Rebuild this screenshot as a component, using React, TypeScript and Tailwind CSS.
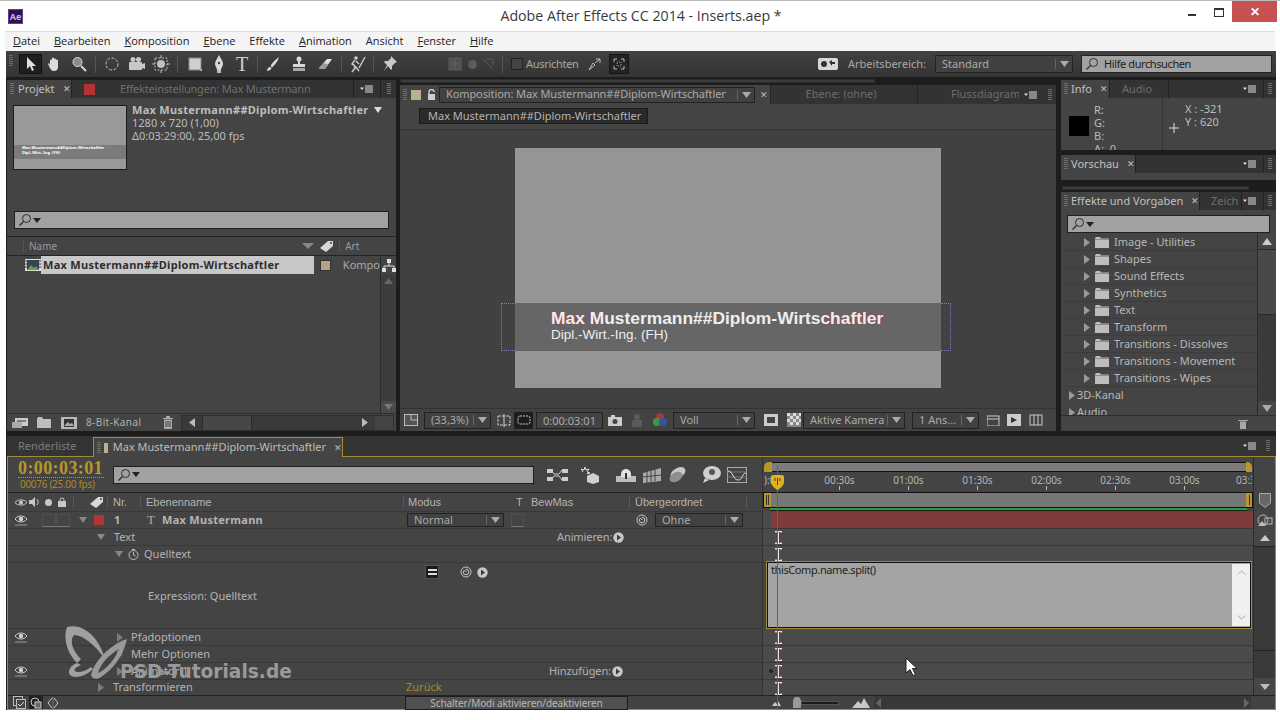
import React from "react";

type P = { className?: string };

const Ic = ({ s = 16, h, children, className = "" }: { s?: number; h?: number; children: React.ReactNode; className?: string }) => (
  <svg width={s} height={h ?? s} viewBox={`0 0 ${s} ${h ?? s}`} className={`shrink-0 ${className}`}>{children}</svg>
);
const Grip = ({ className = "" }: P) => (
  <div className={`w-[4px] h-[12px] shrink-0 flex flex-col gap-[1px] ${className}`}>
    {[0, 1, 2, 3, 4, 5].map((i) => <div key={i} className="h-[1px] bg-[#6c6c6c]" />)}
  </div>
);
const Menu = ({ className = "" }: P) => (
  <Ic s={14} h={8} className={className}>
    <path d="M0 2.5h4L2 5z" fill="#ddd" />
    <path d="M5 1h8M5 3h8M5 5h8M5 7h8" stroke="#ddd" strokeWidth="1" />
  </Ic>
);
const Right = ({ c = "#9a9a9a", s = 8 }: { c?: string; s?: number }) => (
  <Ic s={s} h={9}><path d={`M1 0L${s - 1} 4.5L1 9z`} fill={c} /></Ic>
);
const Lens = ({ c = "#2c2c2c" }: { c?: string }) => (
  <Ic s={14} h={14}>
    <circle cx="8.5" cy="5.5" r="4" fill="none" stroke={c} strokeWidth="1" />
    <path d="M5.5 8.5L1.5 12.5" stroke={c} strokeWidth="1.3" />
  </Ic>
);
const Eye = () => (
  <Ic s={14} h={12}>
    <path d="M1 5C4 1 10 1 13 5C10 9 4 9 1 5z" fill="none" stroke="#d0d0d0" />
    <circle cx="7" cy="5" r="2.2" fill="#d0d0d0" />
    <path d="M1 11h12" stroke="#9c9c9c" />
  </Ic>
);
const Spiral = () => (
  <Ic s={12} h={12}>
    <circle cx="6" cy="6" r="5" fill="none" stroke="#c4c4c4" />
    <path d="M6 3.2a2.8 2.8 0 1 1-2.8 2.8a1.5 1.5 0 0 1 3 0" fill="none" stroke="#c4c4c4" />
  </Ic>
);
const RoundArrow = () => (
  <Ic s={11} h={11}>
    <circle cx="5.5" cy="5.5" r="5.2" fill="#c8c8c8" />
    <path d="M4 2.6L8 5.5L4 8.4z" fill="#3a3a3a" />
  </Ic>
);
const Folder = () => (
  <Ic s={14} h={12}>
    <path d="M0 2.5l1-1.5h4l1 1.5h8v9.5H0z" fill="#bdbdbd" />
    <path d="M0 3.5h14" stroke="#8d8d8d" />
  </Ic>
);
const Beam = () => (
  <Ic s={7} h={13} className="ml-[12px]">
    <path d="M0 0.5h7M0 12.5h7M3.5 0v13" stroke="#f0e4e4" fill="none" />
    <path d="M0 1.5h2M5 1.5h2M0 11.5h2M5 11.5h2" stroke="#b08080" fill="none" />
  </Ic>
);
const Slot = ({ className = "", children }: { className?: string; children: React.ReactNode }) => (
  <div className={`shrink-0 flex items-center justify-center ${className}`}>{children}</div>
);
const Tag = () => (
  <Ic s={16} h={14}>
    <path d="M1 9L9 2h5v5l-7 6z" fill="#d8d8d8" />
    <circle cx="12" cy="4" r="1" fill="#444" />
  </Ic>
);
const Sep = ({ className = "" }: P) => <div className={`w-[1px] h-[18px] bg-[#555] shrink-0 ${className}`} />;
const Dropdown = ({ label, className, text = "text-[#a9a9a9]" }: { label: string; className: string; text?: string }) => (
  <div className={`flex items-center border border-[#222] bg-[#414141] shrink-0 ${className}`}>
    <span className={`flex-1 pl-[6px] whitespace-nowrap overflow-hidden ${text}`}>{label}</span>
    <div className="w-[1px] h-[10px] bg-[#666]" />
    <Slot className="w-[16px]"><Ic s={9} h={6}><path d="M0 0h9L4.5 6z" fill="#aaa" /></Ic></Slot>
  </div>
);

function TitleBar() {
  return (
    <div className="h-[31px] shrink-0 flex items-center relative border-t border-[#bdbdbd] bg-white">
      <div className="ml-[8px] w-[15px] h-[15px] bg-[#2a1450] border border-[#5a4090] text-[9px] leading-[13px] text-center text-[#c8b4f0] font-bold">Ae</div>
      <div className="absolute left-0 right-0 text-center text-[14.2px] text-[#3a3a3a] font-['Open_Sans',sans-serif] pl-[2px]">Adobe After Effects CC 2014 - Inserts.aep *</div>
      <div className="ml-auto flex items-start self-start mr-[3px]">
        <div className="w-[8px] h-[2px] bg-[#333] mt-[13px] mr-[18px]" />
        <div className="w-[10px] h-[9px] border border-[#333] border-t-2 mt-[7px] mr-[8px]" />
        <div className="w-[45px] h-[21px] bg-[#c75050] flex items-center justify-center text-white text-[12px] font-bold">✕</div>
      </div>
    </div>
  );
}

function MenuBar() {
  const items = [["D", "atei"], ["B", "earbeiten"], ["K", "omposition"], ["E", "bene"], ["", "Effekte"], ["A", "nimation"], ["", "Ansicht"], ["F", "enster"], ["H", "ilfe"]];
  return (
    <div className="h-[20px] shrink-0 mx-[5px] bg-[#f4f4f4] border-t border-[#dcdcdc] flex items-center gap-[14px] pl-[8px] text-[11px] text-[#222] font-['Open_Sans',sans-serif]">
      {items.map(([u, r], i) => (
        <span key={i}><span className="underline">{u}</span>{r}</span>
      ))}
    </div>
  );
}

function Toolbar() {
  return (
    <div className="h-[26px] shrink-0 bg-linear-to-b from-[#414141] to-[#343434] flex items-center text-[11px] text-[#a8a8a8]">
      <Grip className="ml-[3px] mr-[6px] h-[18px]" />
      <Slot className="w-[23px] h-[20px] bg-[#1f1f1f] border border-[#111]"><Ic s={12} h={16}><path d="M2 1v12l3-3 2 5 2-1-2-4h4z" fill="#e0e0e0" /></Ic></Slot>
      <Slot className="w-[23px]"><Ic s={16}><path d="M4 9V4.5a1 1 0 0 1 2 0V2.5a1 1 0 0 1 2 0v1a1 1 0 0 1 2 0v1a1 1 0 0 1 2 0V11c0 2.5-1.5 4-4 4s-3.5-1.5-5-5l-1-2c0-1 1.5-1 2 1z" fill="#dcdcdc" /></Ic></Slot>
      <Slot className="w-[27px]"><Ic s={16}><circle cx="6.5" cy="6" r="4.5" fill="#8b8b8b" stroke="#d8d8d8" /><path d="M10 10l5 5" stroke="#d8d8d8" strokeWidth="2" /></Ic></Slot>
      <Sep className="mx-[3px]" />
      <Slot className="w-[26px]"><Ic s={16}><circle cx="8" cy="8" r="6" fill="none" stroke="#c0c0c0" strokeDasharray="3 1.5" /></Ic></Slot>
      <Slot className="w-[24px]"><Ic s={18}><rect x="1" y="7" width="13" height="8" rx="1" fill="#c8c8c8" /><circle cx="5" cy="4.5" r="2.5" fill="#c8c8c8" /><circle cx="10.5" cy="4.5" r="2.5" fill="#c8c8c8" /><path d="M14 9l3-1v6l-3-1z" fill="#c8c8c8" /></Ic></Slot>
      <Slot className="w-[24px]"><Ic s={18}><rect x="3" y="3" width="12" height="12" fill="none" stroke="#c0c0c0" strokeDasharray="2 1.5" /><circle cx="9" cy="9" r="4" fill="#c0c0c0" /><path d="M9 0v3M9 15v3M0 9h3M15 9h3" stroke="#c0c0c0" /></Ic></Slot>
      <Sep className="mx-[4px]" />
      <Slot className="w-[26px]"><Ic s={16}><rect x="2" y="2" width="12" height="12" fill="#cfcfcf" stroke="#888" /><path d="M15 13v2h-2z" fill="#ddd" /></Ic></Slot>
      <Slot className="w-[22px]"><Ic s={14} h={18}><path d="M7 0C9 4 11 6 11 9C11 11 9 13 9 15H5C5 13 3 11 3 9C3 6 5 4 7 0z" fill="#d8d8d8" /><circle cx="7" cy="8" r="1.2" fill="#444" /><rect x="5" y="15" width="4" height="3" fill="#bbb" /></Ic></Slot>
      <Slot className="w-[24px] font-['Liberation_Serif',serif] text-[20px] leading-[20px] text-[#d0d0d0]">T</Slot>
      <Sep className="mx-[3px]" />
      <Slot className="w-[24px]"><Ic s={16}><path d="M14 1C10 4 7 7 5.5 10L7 11.5C10 9 13 5 14 1zM5 11c-2 0-2 2-3.5 3.5C4 15 6 14 6.5 12z" fill="#dcdcdc" /></Ic></Slot>
      <Slot className="w-[28px]"><Ic s={16}><circle cx="8" cy="3" r="2.5" fill="#d8d8d8" /><path d="M7 5h2v3h5v3H2V8h5z" fill="#d8d8d8" /><rect x="2" y="12" width="12" height="3" fill="#aaa" /></Ic></Slot>
      <Slot className="w-[24px]"><Ic s={16}><path d="M10 3h5L8 13H2l1-2z" fill="#e0e0e0" /><path d="M3 11l3-4 5 1-3 5H2z" fill="#9a9a9a" /></Ic></Slot>
      <Sep className="mx-[4px]" />
      <Slot className="w-[24px]"><Ic s={18}><circle cx="7" cy="3" r="1.8" fill="#ccc" /><path d="M6 5L3 9l2 1 1 3-3 4M7 6l3 3M6 11l4 5M16 2L10 13" stroke="#ccc" strokeWidth="1.4" fill="none" /></Ic></Slot>
      <Sep className="mx-[3px]" />
      <Slot className="w-[26px]"><Ic s={18}><path d="M10 1l6 6-2 1-3 3 0 3-1 1-3-4-4 5 3-6-3-3 1-1h3l3-3z" fill="#c8c8c8" /></Ic></Slot>
      <Slot className="w-[14px] ml-[45px]"><Ic s={14}><rect x="1" y="1" width="12" height="12" fill="#505050" stroke="#5c5c5c" /><path d="M7 2v10M3 7h8" stroke="#666" /></Ic></Slot>
      <div className="w-[9px] h-[9px] rounded-full bg-[#5c5c5c] ml-[6px]" />
      <Slot className="w-[14px] ml-[4px]"><Ic s={14}><path d="M2 2l10 10M6 2h6v6" stroke="#5c5c5c" fill="none" /></Ic></Slot>
      <Sep className="ml-[7px] bg-[#4d4d4d]" />
      <div className="w-[12px] h-[12px] border border-[#222] bg-[#444] ml-[8px]" />
      <span className="ml-[3px] tracking-[-0.3px]">Ausrichten</span>
      <Slot className="w-[14px] ml-[8px]"><Ic s={14}><path d="M2 13L6 6l2 2zM8 6l5-4M13 2v4M13 2H9" stroke="#bdbdbd" fill="none" /></Ic></Slot>
      <Slot className="w-[20px] h-[20px] ml-[8px] bg-[#242424] border border-[#151515]"><Ic s={12}><path d="M1 4V1h3M8 1h3v3M11 8v3H8M4 11H1V8" stroke="#bbb" fill="none" /><rect x="4" y="4" width="4" height="4" fill="none" stroke="#999" strokeDasharray="1 1" /></Ic></Slot>
      <div className="ml-auto flex items-center">
        <Slot className="w-[20px] h-[12px] bg-[#d8d8d8] rounded-[2px]"><Ic s={18} h={10}><circle cx="5" cy="5" r="3" fill="#333" /><path d="M10 3l3-2v2h3v2h-3v2z" fill="#333" /></Ic></Slot>
        <span className="ml-[10px] mr-[9px]">Arbeitsbereich:</span>
        <Dropdown label="Standard" className="w-[138px] h-[18px]" />
        <div className="ml-[8px] mr-[4px] w-[191px] h-[18px] border border-[#222] bg-[#a2a2a2] flex items-center pl-[3px] text-[#1d1d1d]">
          <Lens c="#333" /><span className="ml-[5px] tracking-[-0.4px]">Hilfe durchsuchen</span>
        </div>
      </div>
    </div>
  );
}

function Tab({ children, className = "" }: { children: React.ReactNode; className?: string }) {
  return <div className={`h-[18px] flex items-center shrink-0 ${className}`}>{children}</div>;
}

const BOLD = "font-bold tracking-[0.28px]";

function ProjectPanel() {
  return (
    <div className="w-[389px] ml-[1px] mr-[4px] flex flex-col shrink-0">
      <div className="h-[18px] mt-[3px] shrink-0 flex bg-[#333] text-[11px]">
        <Tab className="w-[64px] bg-[#444] text-[#c0c0c0] pl-[3px]"><Grip /><span className="ml-[4px]">Projekt</span><span className="ml-[8px] text-[9px]">✕</span></Tab>
        <Tab className="w-[282px] border-l border-[#222] pl-[12px] text-[#6f6f6f] tracking-[-0.2px]"><div className="w-[11px] h-[11px] bg-[#b33434] mr-[25px]" />Effekteinstellungen: Max Mustermann</Tab>
        <Tab className="w-[27px] border-l border-[#222] justify-center"><Menu /></Tab>
        <Tab className="flex-1 border-l border-[#222] justify-center"><Grip /></Tab>
      </div>
      <div className="flex-1 bg-[#444] flex flex-col min-h-0">
        <div className="h-[113px] shrink-0 flex pt-[7px] pl-[6px]">
          <div className="w-[114px] h-[65px] border border-[#1b1b1b] bg-[#999] flex flex-col justify-start pt-[39px] shrink-0">
            <div className="h-[14px] bg-[#7b7b7b] pl-[8px] text-[4px] leading-[5px] text-white whitespace-nowrap overflow-hidden font-bold">Max Mustermann##Diplom-Wirtschaftler<br />Dipl.-Wirt.-Ing. (FH)</div>
          </div>
          <div className="ml-[5px] mt-[-2px] text-[11px] leading-[13px] text-[#bdbdbd]">
            <div className={`flex items-center ${BOLD}`}><span>Max Mustermann##Diplom-Wirtschaftler</span><Ic s={8} h={6} className="ml-[6px]"><path d="M0 0h8L4 6z" fill="#ddd" /></Ic></div>
            <div>1280 x 720 (1,00)</div>
            <div>Δ0:03:29:00, 25,00 fps</div>
          </div>
        </div>
        <div className="h-[18px] mx-[7px] shrink-0 bg-[#a1a1a1] border border-[#1f1f1f] flex items-center pl-[3px]"><Lens /><Ic s={8} h={5} className="ml-[1px]"><path d="M0 0h8L4 5z" fill="#222" /></Ic></div>
        <div className="h-[20px] mt-[7px] shrink-0 border-t border-b border-[#242424] flex items-center text-[10px] text-[#9a9a9a]">
          <div className="w-[1px] h-[12px] bg-[#555] ml-[16px] mr-[5px]" />
          <span>Name</span>
          <Ic s={12} h={6} className="ml-[245px]"><path d="M0 0h12L6 6z" fill="#888" /></Ic>
          <Slot className="w-[22px] ml-[2px]"><Tag /></Slot>
          <div className="w-[1px] h-[12px] bg-[#555] ml-[1px] mr-[5px]" />
          <span>Art</span>
        </div>
        <div className="flex-1 flex min-h-0">
          <div className="flex-1 min-w-0">
            <div className="h-[18px] flex items-center">
              <Slot className="w-[17px] ml-[17px]"><Ic s={16} h={12}><rect width="16" height="12" fill="#ddd" /><rect x="2" y="1" width="12" height="10" fill="#345" /><path d="M2 11l4-5 3 3 2-2 3 4z" fill="#6a9a4a" /><path d="M0 2h2M0 5h2M0 8h2M14 2h2M14 5h2M14 8h2" stroke="#333" /></Ic></Slot>
              <div className={`w-[273px] h-[18px] bg-[#c8c8c8] text-[#2e2e2e] text-[11px] flex items-center pl-[2px] ${BOLD}`}>Max Mustermann##Diplom-Wirtschaftler</div>
              <div className="w-[11px] h-[11px] bg-[#b4a482] border border-[#333] ml-[6px]" />
              <span className="ml-[12px] text-[11px] text-[#a8a8a8]">Kompo</span>
            </div>
          </div>
          <div className="w-[16px] flex flex-col bg-[#3d3d3d] border-l border-[#2b2b2b] shrink-0">
            <Slot className="h-[18px] bg-[#444]"><Ic s={14} h={13}><rect x="5" y="0" width="4" height="4" fill="#ddd" /><path d="M7 4v3M2 9V7h10v2" stroke="#ddd" fill="none" /><rect x="0" y="9" width="4" height="4" fill="#ddd" /><rect x="10" y="9" width="4" height="4" fill="#ddd" /></Ic></Slot>
            <Slot className="h-[14px]"><Ic s={9} h={6}><path d="M0 6h9L4.5 0z" fill="#666" /></Ic></Slot>
            <div className="flex-1" />
            <Slot className="h-[12px] bg-[#4a4a4a]"><Ic s={9} h={6}><path d="M0 0h9L4.5 6z" fill="#777" /></Ic></Slot>
          </div>
        </div>
        <div className="h-[18px] shrink-0 flex items-center border-t border-[#2e2e2e] text-[10px] text-[#b0b0b0]">
          <Slot className="w-[17px] ml-[4px]"><Ic s={16} h={12}><rect x="3" y="1" width="13" height="8" fill="#ccc" /><rect x="0" y="5" width="10" height="6" fill="#aaa" /><path d="M5 4h9" stroke="#333" /></Ic></Slot>
          <Slot className="w-[14px] ml-[9px]"><Ic s={14} h={11}><path d="M0 2l1-2h4l1 2h8v9H0z" fill="#bdbdbd" /></Ic></Slot>
          <Slot className="w-[17px] ml-[9px]"><Ic s={16} h={12}><rect width="16" height="12" fill="#b8b8b8" /><rect x="3" y="2" width="10" height="8" fill="#333" /><path d="M3 9l4-4 2 2 2-1 2 3z" fill="#aaa" /></Ic></Slot>
          <span className="ml-[9px] tracking-[0.4px]">8-Bit-Kanal</span>
          <Slot className="w-[12px] ml-[21px]"><Ic s={12} h={13}><path d="M1 2h10v1H1zM4 0h4v2H4zM2 3.5h8V13H2z" fill="#a8a8a8" /><path d="M4 5v6M6 5v6M8 5v6" stroke="#444" /></Ic></Slot>
          <div className="ml-[7px] flex-1 mr-[2px] h-[16px] flex items-center bg-[#3a3a3a] border border-[#2e2e2e]">
            <Slot className="w-[20px]"><Ic s={6} h={9}><path d="M6 0v9L0 4.5z" fill="#bbb" /></Ic></Slot>
            <div className="w-[50px] h-[14px] bg-[#474747] border-x border-[#2a2a2a]" />
            <div className="flex-1" />
            <Slot className="w-[20px]"><Ic s={6} h={9}><path d="M0 0v9L6 4.5z" fill="#bbb" /></Ic></Slot>
            <div className="w-[18px] h-[14px] bg-[#444]" />
          </div>
        </div>
      </div>
    </div>
  );
}

function CompPanel() {
  const halo = "[text-shadow:0_0_2px_#b04050]";
  return (
    <div className="w-[656px] mr-[5px] flex flex-col shrink-0">
      <div className="h-[8px] shrink-0 flex items-center"><div className="w-[475px] h-[4px] bg-[#3c3c3c] border border-[#2b2b2b]" /></div>
      <div className="h-[19px] shrink-0 flex bg-[#333] text-[11px]">
        <Tab className="w-[370px] h-[19px] bg-[#444] pl-[3px]">
          <Grip /><div className="w-[10px] h-[10px] bg-[#bdb091] ml-[4px]" />
          <Ic s={9} h={11} className="ml-[6px]"><path d="M2 5V3a2.5 2.5 0 0 1 5 0" stroke="#ccc" fill="none" strokeWidth="1.4" /><rect x="1" y="5" width="7" height="6" fill="#ccc" /></Ic>
          <Dropdown label="Komposition: Max Mustermann##Diplom-Wirtschaftler" className="w-[316px] h-[16px] ml-[3px] tracking-[-0.1px]" />
          <span className="ml-[5px] text-[9px] text-[#bbb]">✕</span>
        </Tab>
        <Tab className="w-[147px] h-[19px] border-l border-[#222] justify-center pr-[6px] text-[#6d6d6d]">Ebene: (ohne)</Tab>
        <Tab className="flex-1 h-[19px] border-l border-[#222] pl-[33px] text-[#6d6d6d] whitespace-nowrap"><span className="w-[68px] overflow-hidden">Flussdiagramm</span><Menu className="ml-[5px]" /></Tab>
        <Tab className="w-[13px] h-[19px] justify-center"><Grip /></Tab>
      </div>
      <div className="flex-1 flex flex-col bg-[#444] min-h-0">
        <div className="h-[26px] shrink-0 border-b border-[#343434] pl-[19px] pt-[4px]">
          <div className="w-[229px] h-[16px] bg-[#2a2a2a] border border-[#1c1c1c] text-[11px] leading-[14px] text-[#b4b4b4] pl-[8px]">Max Mustermann##Diplom-Wirtschaftler</div>
        </div>
        <div className="flex-1 bg-[#414141] min-h-0 flex flex-col pl-[115px] pt-[18px] pr-[115px]">
          <div className="w-[426px] h-[240px] bg-[#959595] flex flex-col pt-[155px] relative">
            <div className="h-[48px] bg-[#666] pl-[36px] pt-[5px] font-['Liberation_Sans',sans-serif] text-[#eee]">
              <div className="text-[17.4px] leading-[20px] font-bold whitespace-nowrap"><span className={halo}>Max M</span>ustermann##Diplom-Wirts<span className={halo}>chaftler</span></div>
              <div className="text-[13.5px] leading-[14px] whitespace-nowrap">Dipl.-Wirt.-Ing. (FH)</div>
            </div>
            <div className="absolute left-[-14px] top-[155px] w-[14px] h-[48px] border border-r-0 border-dotted border-[#7c7cb0]" />
            <div className="absolute right-[-10px] top-[155px] w-[10px] h-[48px] border border-l-0 border-dotted border-[#7c7cb0]" />
          </div>
        </div>
        <div className="h-[23px] shrink-0 flex items-center text-[11px] bg-[#424242] border-t border-[#333]">
          <Slot className="w-[14px] ml-[4px]"><Ic s={14} h={12}><rect x="0.5" y="0.5" width="13" height="11" fill="#555" stroke="#bbb" /><path d="M7 1v5h6" stroke="#bbb" fill="none" /></Ic></Slot>
          <Dropdown label="(33,3%)" className="w-[67px] h-[17px] ml-[6px]" />
          <Slot className="w-[20px] ml-[3px]"><Ic s={15} h={13}><rect x="1" y="2" width="12" height="9" fill="none" stroke="#ccc" strokeDasharray="3 1" /><path d="M7 0v13" stroke="#ccc" /></Ic></Slot>
          <Slot className="w-[19px] h-[17px] bg-[#1d1d1d]"><Ic s={14} h={10}><rect x="1" y="1" width="12" height="8" rx="2" fill="none" stroke="#ccc" strokeDasharray="2 1" /></Ic></Slot>
          <div className="w-[67px] h-[17px] ml-[3px] border border-[#222] text-[#aaa] text-center leading-[15px]">0:00:03:01</div>
          <Slot className="w-[14px] ml-[5px]"><Ic s={14} h={11}><rect y="2" width="14" height="9" fill="#ccc" /><rect x="3" width="4" height="2" fill="#ccc" /><circle cx="7" cy="6.5" r="2.5" fill="#444" /></Ic></Slot>
          <Slot className="w-[12px] ml-[9px]"><Ic s={12} h={13}><circle cx="6" cy="3" r="3" fill="#5b5b5b" /><rect x="1" y="6" width="10" height="7" fill="#5b5b5b" /></Ic></Slot>
          <Slot className="w-[16px] ml-[9px]"><Ic s={16} h={14}><circle cx="8" cy="4.5" r="4" fill="#b03838" /><circle cx="5" cy="9" r="4" fill="#3c9a3c" /><circle cx="11" cy="9" r="4" fill="#3a50a8" /></Ic></Slot>
          <Dropdown label="Voll" className="w-[82px] h-[17px] ml-[5px]" />
          <Slot className="w-[16px] ml-[8px]"><Ic s={14} h={12}><rect width="14" height="12" fill="#ccc" /><rect x="3" y="3" width="8" height="6" fill="#444" /></Ic></Slot>
          <Slot className="w-[14px] ml-[8px]"><Ic s={14}><rect width="14" height="14" fill="#888" /><path d="M0 0h3v3H0zM6 0h3v3H6zM12 0h2v3h-2zM3 3h3v3H3zM9 3h3v3H9zM0 6h3v3H0zM6 6h3v3H6zM12 6h2v3h-2zM3 9h3v3H3zM9 9h3v3H9z" fill="#ddd" /></Ic></Slot>
          <Dropdown label="Aktive Kamera" className="w-[102px] h-[17px] ml-[2px]" />
          <Dropdown label="1 Ans..." className="w-[67px] h-[17px] ml-[7px]" />
          <Slot className="w-[14px] ml-[8px]"><Ic s={14} h={12}><rect y="2" width="12" height="10" fill="none" stroke="#ccc" /><path d="M0 5h12" stroke="#ccc" /></Ic></Slot>
          <Slot className="w-[14px] ml-[6px]"><Ic s={14} h={12}><rect width="14" height="12" fill="#ccc" /><path d="M4 3l6 3-6 3z" fill="#333" /></Ic></Slot>
          <Slot className="w-[14px] ml-[8px]"><Ic s={14} h={12}><rect x="1" y="1" width="12" height="10" fill="none" stroke="#ccc" /><path d="M5 1v10M9 1v10" stroke="#ccc" /></Ic></Slot>
        </div>
      </div>
    </div>
  );
}

function RightColumn() {
  const rows = ["Image - Utilities", "Shapes", "Sound Effects", "Synthetics", "Text", "Transform", "Transitions - Dissolves", "Transitions - Movement", "Transitions - Wipes"];
  const Strip = ({ a, b, w }: { a: string; b?: string; w: string }) => (
    <div className="h-[18px] shrink-0 flex bg-[#333] text-[11px]">
      <Tab className={`${w} bg-[#444] text-[#c0c0c0] pl-[3px]`}><Grip /><span className="ml-[3px] whitespace-nowrap">{a}</span><span className="ml-[8px] text-[9px]">✕</span></Tab>
      {b && <Tab className={`border-l border-[#222] text-[#6d6d6d] ${a === "Info" ? "w-[59px] pl-[12px]" : "w-[42px] pl-[11px]"}`}>{b}</Tab>}
      <Tab className="flex-1 border-l border-[#222] justify-end pr-[6px]"><Menu /></Tab>
      <Tab className="w-[13px] border-l border-[#222] justify-center"><Grip /></Tab>
    </div>
  );
  return (
    <div className="w-[215px] flex flex-col shrink-0 text-[11px]">
      <div className="mt-[3px]"><Strip a="Info" b="Audio" w="w-[48px]" /></div>
      <div className="h-[52px] shrink-0 bg-[#444] flex text-[#bdbdbd] overflow-hidden">
        <div className="w-[102px] border-r border-[#343434] flex shrink-0">
          <div className="w-[20px] h-[20px] bg-black mt-[18px] ml-[8px]" />
          <div className="ml-[5px] leading-[13px] mt-[5px]"><div>R:</div><div>G:</div><div>B:</div><div>A:&nbsp; 0</div></div>
        </div>
        <div className="flex">
          <Ic s={12} className="mt-[24px] ml-[5px]"><path d="M6 1v10M1 6h10" stroke="#ddd" /></Ic>
          <div className="ml-[5px] leading-[13px] mt-[4px]"><div>X : -321</div><div>Y : 620</div></div>
        </div>
      </div>
      <div className="h-[5px] shrink-0" />
      <Strip a="Vorschau" w="w-[74px]" />
      <div className="h-[7px] shrink-0 bg-[#444]" />
      <div className="h-[6px] shrink-0" />
      <div className="h-[4px] shrink-0 w-[187px] ml-[1px] bg-[#3c3c3c] border border-[#2b2b2b]" />
      <div className="h-[2px] shrink-0" />
      <Strip a="Effekte und Vorgaben" b="Zeich" w="w-[138px]" />
      <div className="flex-1 bg-[#444] flex flex-col min-h-0">
        <div className="h-[18px] shrink-0 mx-[6px] mt-[5px] bg-[#a1a1a1] border border-[#1f1f1f] flex items-center pl-[3px]"><Lens /><Ic s={8} h={5} className="ml-[1px]"><path d="M0 0h8L4 5z" fill="#222" /></Ic></div>
        <div className="flex-1 flex min-h-0 mt-[1px]">
          <div className="flex-1 overflow-hidden text-[#b8b8b8]">
            {rows.map((r) => (
              <div key={r} className="h-[17px] flex items-center pl-[22px] border-b border-[#3c3c3c]">
                <Right /><Slot className="ml-[4px]"><Folder /></Slot><span className="ml-[5px] whitespace-nowrap">{r}</span>
              </div>
            ))}
            <div className="h-[17px] flex items-center pl-[7px]"><Right /><span className="ml-[1px]">3D-Kanal</span></div>
            <div className="h-[17px] flex items-center pl-[7px]"><Right /><span className="ml-[1px]">Audio</span></div>
          </div>
          <div className="w-[19px] shrink-0 bg-[#3a3a3a] border-l border-[#2a2a2a] flex flex-col">
            <Slot className="h-[15px] bg-[#464646]"><Ic s={10} h={7}><path d="M0 7h10L5 0z" fill="#ccc" /></Ic></Slot>
            <div className="h-[66px] bg-[#494949] border-y border-[#2a2a2a]" />
            <div className="flex-1" />
            <Slot className="h-[14px] bg-[#464646]"><Ic s={10} h={7}><path d="M0 0h10L5 7z" fill="#aaa" /></Ic></Slot>
          </div>
        </div>
        <div className="h-[16px] shrink-0 border-t border-[#2e2e2e] flex items-center justify-end pr-[27px]"><Ic s={12} h={11}><path d="M1 2h10v1H1zM3 3.5h6V11H3z" fill="#a8a8a8" /></Ic></div>
      </div>
    </div>
  );
}

const LRow = ({ children, className = "" }: { children?: React.ReactNode; className?: string }) => (
  <div className={`h-[17px] shrink-0 flex items-center border-b border-[#383838] text-[11px] text-[#b4b4b4] whitespace-nowrap ${className}`}>{children}</div>
);
const RRow = ({ beam = true, dot = false }: { beam?: boolean; dot?: boolean }) => (
  <div className="h-[17px] shrink-0 flex items-center bg-[#4a4a4a] border-b border-[#383838] relative">
    {beam && <Beam />}
    {dot && <div className="absolute left-[6px] top-[6px] w-[4px] h-[4px] rounded-full bg-[#222]" />}
  </div>
);
const HSep = ({ className = "" }: P) => <div className={`w-[1px] h-[11px] bg-[#5a5a5a] shrink-0 ${className}`} />;

function Timeline() {
  const labels = ["00:30s", "01:00s", "01:30s", "02:00s", "02:30s", "03:00s"];
  return (
    <div className="h-[274px] ml-[1px] flex flex-col shrink-0 mt-[5px]">
      <div className="h-[20px] shrink-0 flex text-[11px] items-end bg-[#343434] relative z-10">
        <Tab className="w-[86px] h-[19px] text-[#7c7c7c] pl-[11px]">Renderliste</Tab>
        <Tab className="w-[250px] h-[20px] bg-[#444] border-t border-x border-[#a08a3c] pl-[3px] text-[#bdbdbd] mb-[-1px] whitespace-nowrap">
          <Grip /><div className="w-[10px] h-[10px] bg-[#bdb091] ml-[3px] mr-[5px]" />Max Mustermann##Diplom-Wirtschaftler<span className="ml-[8px] text-[9px]">✕</span>
        </Tab>
        <div className="flex-1 flex justify-end items-center pr-[9px] self-stretch"><Menu /></div>
        <Grip className="mr-[6px] self-center" />
      </div>
      <div className="flex-1 flex flex-col border border-[#a08a3c] bg-[#444] min-h-0">
        <div className="flex-1 flex min-h-0 overflow-hidden">
          <div className="w-[755px] shrink-0 flex flex-col border-r border-[#333] min-h-0">
            <div className="h-[36px] shrink-0 flex items-center border-b border-[#222]">
              <div className="ml-[10px] w-[86px] font-['Liberation_Serif',serif]">
                <div className="text-[18px] leading-[17px] font-bold text-[#b8962a] border-b border-dotted border-[#b8962a] tracking-[0.4px] whitespace-nowrap">0:00:03:01</div>
                <div className="text-[10px] leading-[12px] text-[#a8892e] font-['Noto_Sans',sans-serif] pl-[2px] whitespace-nowrap tracking-[-0.3px]">00076 (25.00 fps)</div>
              </div>
              <div className="ml-[9px] w-[421px] h-[18px] bg-[#a1a1a1] border border-[#1f1f1f] flex items-center pl-[3px]"><Lens /><Ic s={8} h={5} className="ml-[1px]"><path d="M0 0h8L4 5z" fill="#222" /></Ic></div>
              <Slot className="w-[26px] ml-[13px]"><Ic s={26} h={14}><path d="M0 2h4l3 4h5l3-4h4M0 12h4l3-4h5l3 4h4" stroke="#ccc" fill="none" /><rect x="0" y="1" width="6" height="4" fill="#ccc" /><rect x="0" y="9" width="6" height="4" fill="#ccc" /><rect x="15" y="1" width="6" height="4" fill="#ccc" /><rect x="15" y="9" width="6" height="4" fill="#ccc" /></Ic></Slot>
              <Slot className="w-[22px] ml-[7px]"><Ic s={20} h={18}><path d="M12 7l6 3v6l-6 2-6-2v-6z" fill="#cfcfcf" /><path d="M4 1l1 3 3-1-2 3 3 1-3 1M4 1L3 4 0 3l2 3" stroke="#ddd" fill="none" /></Ic></Slot>
              <Slot className="w-[20px] ml-[14px]"><Ic s={20} h={14}><rect y="8" width="20" height="6" fill="#bdbdbd" /><path d="M5 6a5 5 0 0 1 10 0v3H5z" fill="#e0e0e0" /><path d="M9 5h2v6H9z" fill="#333" /></Ic></Slot>
              <Slot className="w-[20px] ml-[6px]"><Ic s={20} h={16}><path d="M1 6l18-5v13L1 16z" fill="#aaa" /><path d="M5 4v12M9 3v12M13 2v12M1 10l18-2" stroke="#444" /></Ic></Slot>
              <Slot className="w-[20px] ml-[6px]"><Ic s={18} h={16}><ellipse cx="9" cy="6" rx="8" ry="5" transform="rotate(-30 9 6)" fill="#c8c8c8" /><ellipse cx="7" cy="10" rx="7" ry="4.5" transform="rotate(-30 7 10)" fill="#8f8f8f" /></Ic></Slot>
              <Slot className="w-[20px] ml-[13px]"><Ic s={20} h={18}><ellipse cx="11" cy="7" rx="9" ry="7" fill="#d0d0d0" /><circle cx="11" cy="6" r="3" fill="#555" /><path d="M4 12l-2 5 6-3z" fill="#d0d0d0" /></Ic></Slot>
              <Slot className="w-[20px] ml-[6px]"><Ic s={20} h={16}><rect x="0.5" y="0.5" width="19" height="15" fill="none" stroke="#aaa" /><path d="M0 5h20M0 10h20" stroke="#777" /><path d="M1 4c5 0 5 9 10 9s4-7 8-7" fill="none" stroke="#ddd" /></Ic></Slot>
            </div>
            <LRow className="h-[19px] border-[#222] text-[#8f8f8f] font-['Liberation_Sans',sans-serif] text-[10px]">
              <Slot className="w-[14px] ml-[6px]"><Ic s={12} h={9}><path d="M0 4.5C3 1 9 1 12 4.5C9 8 3 8 0 4.5z" fill="none" stroke="#c8c8c8" /><circle cx="6" cy="4.5" r="2" fill="#c8c8c8" /></Ic></Slot>
              <Slot className="w-[11px] ml-[1px]"><Ic s={11} h={10}><path d="M0 3h3l3-3v10L3 7H0z" fill="#c8c8c8" /><path d="M8 2c1.5 2 1.5 4 0 6" stroke="#c8c8c8" fill="none" /></Ic></Slot>
              <div className="w-[7px] h-[7px] rounded-full bg-[#c8c8c8] ml-[5px]" />
              <Ic s={8} h={10} className="ml-[6px]"><path d="M2 4V3a2 2 0 0 1 4 0v1" stroke="#c8c8c8" fill="none" /><rect y="4" width="8" height="6" fill="#c8c8c8" /></Ic>
              <HSep className="ml-[7px]" />
              <Slot className="w-[16px] ml-[15px]"><Tag /></Slot>
              <HSep className="ml-[2px] mr-[5px]" />
              <span className="w-[27px]">Nr.</span>
              <HSep className="mr-[5px]" />
              <span className="w-[257px]">Ebenenname</span>
              <HSep className="mr-[4px]" />
              <span className="w-[108px]">Modus</span>
              <span className="w-[15px]">T</span>
              <span className="w-[98px]">BewMas</span>
              <HSep className="mr-[5px]" />
              <span className="w-[111px]">Übergeordnet</span>
              <HSep />
            </LRow>
            <LRow className="border-[#2b2b2b]">
              <Slot className="w-[14px] ml-[6px]"><Eye /></Slot>
              <div className="w-[14px] h-[13px] ml-[14px] border border-[#4f4f4f] border-b-[#777]" />
              <div className="w-[14px] h-[13px] border border-[#4f4f4f] border-b-[#777]" />
              <Slot className="w-[8px] ml-[9px]"><Ic s={8} h={6}><path d="M0 0h8L4 6z" fill="#888" /></Ic></Slot>
              <div className="w-[10px] h-[10px] bg-[#b33434] ml-[7px]" />
              <span className="w-[33px] ml-[10px] font-bold">1</span>
              <span className="w-[15px] font-['Liberation_Serif',serif] text-[#aaa] text-[13px]">T</span>
              <span className={`w-[245px] ${BOLD}`}>Max Mustermann</span>
              <Dropdown label="Normal" className="w-[97px] h-[14px]" />
              <div className="w-[13px] h-[13px] ml-[7px] border border-[#4f4f4f] border-b-[#777]" />
              <Slot className="w-[12px] ml-[112px]"><Spiral /></Slot>
              <Dropdown label="Ohne" className="w-[88px] h-[14px] ml-[7px]" />
            </LRow>
            <LRow>
              <Slot className="w-[8px] ml-[89px]"><Ic s={8} h={6}><path d="M0 0h8L4 6z" fill="#888" /></Ic></Slot>
              <span className="ml-[9px] w-[443px]">Text</span>
              <span className="tracking-[-0.1px]">Animieren:</span><Slot className="ml-[1px]"><RoundArrow /></Slot>
            </LRow>
            <LRow>
              <Slot className="w-[8px] ml-[107px]"><Ic s={8} h={6}><path d="M0 0h8L4 6z" fill="#888" /></Ic></Slot>
              <Ic s={11} className="ml-[5px]"><circle cx="5.5" cy="6" r="4.5" fill="none" stroke="#bbb" /><path d="M5.5 3v3l2 1M4 0.5h3" stroke="#bbb" fill="none" /></Ic>
              <span className="ml-[5px]">Quelltext</span>
            </LRow>
            <div className="h-[66px] shrink-0 border-b border-[#383838] flex flex-col text-[11px] text-[#b4b4b4]">
              <div className="h-[18px] flex items-center pl-[417px]">
                <div className="w-[14px] h-[14px] bg-[#1a1a1a] border border-[#555] flex flex-col items-center justify-center gap-[2px]"><div className="w-[9px] h-[2px] bg-[#ddd]" /><div className="w-[9px] h-[2px] bg-[#ddd]" /></div>
                <Slot className="ml-[21px]"><Spiral /></Slot>
                <Slot className="ml-[5px]"><RoundArrow /></Slot>
              </div>
              <div className="pl-[140px] mt-[7px]">Expression: Quelltext</div>
            </div>
            <LRow><Slot className="w-[14px] ml-[6px]"><Eye /></Slot><span className="ml-[88px]"><Right c="#7c7c7c" /></span><span className="ml-[7px]">Pfadoptionen</span></LRow>
            <LRow><span className="ml-[108px]"><Right c="#7c7c7c" /></span><span className="ml-[7px]">Mehr Optionen</span></LRow>
            <LRow><Slot className="w-[14px] ml-[6px]"><Eye /></Slot><span className="ml-[88px]"><Right c="#7c7c7c" /></span><span className="ml-[7px] w-[418px]">Animator 1</span><span className="tracking-[-0.1px]">Hinzufügen:</span><Slot className="ml-[1px]"><RoundArrow /></Slot></LRow>
            <div className="h-[15px] shrink-0 flex items-center text-[11px] text-[#b4b4b4] whitespace-nowrap"><span className="ml-[89px]"><Right c="#7c7c7c" /></span><span className="ml-[8px] w-[293px]">Transformieren</span><span className="text-[#a8892e]">Zurück</span></div>
          </div>
          <div className="w-[490px] shrink-0 flex flex-col min-h-0 overflow-hidden">
            <div className="h-[35px] shrink-0 flex flex-col px-[1px]">
              <div className="h-[10px] mt-[5px] shrink-0 flex">
                <div className="w-[8px] bg-[#b8962a] rounded-tl-[5px]" />
                <div className="flex-1 bg-[#7c7c7c] border-y border-[#111]" />
                <div className="w-[6px] bg-[#b8962a] rounded-tr-[5px]" />
              </div>
              <div className="flex-1 flex text-[10px] text-[#b4b4b4] pt-[2px] whitespace-nowrap overflow-hidden">
                <span className="w-[41px] shrink-0 leading-[12px]">):0</span>
                {labels.map((l) => (
                  <div key={l} className="w-[69px] shrink-0 flex flex-col items-center leading-[12px]"><span>{l}</span><div className="w-[1px] h-[4px] bg-[#bbb]" /></div>
                ))}
                <span className="ml-[17px] leading-[12px]">03:3</span>
              </div>
            </div>
            <div className="h-[16px] shrink-0 flex bg-[#777] border border-[#111]">
              <div className="w-[7px] bg-[#b8962a] flex justify-center gap-[1px] py-[2px]"><div className="w-[1px] bg-[#333]" /><div className="w-[1px] bg-[#333]" /></div>
              <div className="flex-1" />
              <div className="w-[6px] bg-[#b8962a] flex justify-center gap-[1px] py-[2px]"><div className="w-[1px] bg-[#333]" /></div>
            </div>
            <div className="h-[3px] shrink-0 bg-[#2e9a3e] border-b border-[#1e1e1e] ml-[7px] mr-[6px]" />
            <div className="h-[18px] shrink-0 bg-[#4a4a4a] pl-[8px] border-b border-[#383838] pt-[1px]"><div className="h-[16px] bg-[#7f3b3b]" /></div>
            <RRow />
            <RRow />
            <div className="h-[68px] shrink-0 bg-[#a4a4a4] border border-[#a08a3c] outline outline-[#111] -outline-offset-2 flex ml-[3px] mr-[1px] mt-[-2px] relative">
              <div className="flex-1 pl-[4px] pt-[1px] text-[11px] leading-[14px] text-[#1f1f1f] tracking-[-0.4px]">thisComp.name.split()</div>
              <div className="w-[18px] bg-[#f0f0f0] mr-[1px] my-[2px] flex flex-col items-center justify-between py-[6px]">
                <Ic s={9} h={5}><path d="M0.5 4.5L4.5 1l4 3.5" stroke="#aaa" fill="none" /></Ic>
                <Ic s={9} h={5}><path d="M0.5 0.5L4.5 4l4-3.5" stroke="#aaa" fill="none" /></Ic>
              </div>
            </div>
            <RRow />
            <RRow />
            <RRow dot />
            <RRow />
          </div>
          <div className="w-[24px] flex-1 flex flex-col bg-[#3a3a3a] border-l border-[#2b2b2b] min-w-0">
            <div className="h-[35px] shrink-0 bg-[#444]" />
            <Slot className="h-[16px] shrink-0 bg-[#444]"><Ic s={12} h={15}><path d="M0.5 0.5h11V10L6 14.5L0.5 10z" fill="#666" stroke="#aaa" /></Ic></Slot>
            <div className="h-[3px] shrink-0 bg-[#444]" />
            <Slot className="h-[18px] shrink-0 bg-[#444]"><Ic s={16} h={13}><circle cx="6" cy="6" r="5" fill="none" stroke="#bbb" /><rect x="8" y="4" width="7" height="6" fill="none" stroke="#bbb" /><path d="M1 12l4-5 4 5z" fill="#bbb" /></Ic></Slot>
            <Slot className="h-[17px] shrink-0 bg-[#464646]"><Ic s={10} h={6}><path d="M0 6h10L5 0z" fill="#ccc" /></Ic></Slot>
            <div className="h-[105px] shrink-0 bg-[#3a3a3a] border-y border-[#222]" />
            <div className="flex-1" />
            <Slot className="h-[17px] shrink-0 bg-[#464646]"><Ic s={10} h={6}><path d="M0 0h10L5 6z" fill="#bbb" /></Ic></Slot>
          </div>
        </div>
        <div className="h-[14px] shrink-0 flex items-center border-t border-[#222] bg-[#424242]">
          <Slot className="w-[14px] ml-[4px]"><Ic s={13} h={13}><rect x="0.5" y="0.5" width="9" height="9" fill="none" stroke="#bbb" /><rect x="3.5" y="3.5" width="9" height="9" fill="#444" stroke="#bbb" /><path d="M5 8l2 2 4-4" stroke="#ddd" fill="none" /></Ic></Slot>
          <Slot className="w-[14px] h-[13px] ml-[3px] bg-[#222]"><Ic s={12} h={12}><circle cx="5" cy="5" r="4" fill="none" stroke="#ccc" /><rect x="5" y="5" width="6" height="6" fill="#666" stroke="#ccc" /></Ic></Slot>
          <Slot className="w-[12px] ml-[4px]"><Ic s={12} h={12}><path d="M5 1L1 6l4 5M7 1l4 5-4 5" stroke="#ccc" fill="none" /><path d="M6 0v12" stroke="#777" /></Ic></Slot>
          <div className="ml-[346px] w-[223px] h-[14px] bg-[#505050] border border-[#1e1e1e] text-[10px] leading-[12px] text-center text-[#b8b8b8] tracking-[-0.1px]">Schalter/Modi aktivieren/deaktivieren</div>
          <Slot className="w-[10px] ml-[143px]"><Ic s={9} h={6}><path d="M0 6l3-4 1.5 2L6 1l3 5z" fill="#ccc" /></Ic></Slot>
          <Ic s={8} h={11} className="ml-[12px]"><path d="M2 0h4l2 3v8H0V3z" fill="#999" /></Ic>
          <div className="w-[38px] h-[4px] bg-[#1b1b1b] border border-[#555]" />
          <Slot className="w-[18px] ml-[13px]"><Ic s={18} h={10}><path d="M0 10l6-7 3 3 3-6 6 10z" fill="#c8c8c8" /></Ic></Slot>
          <div className="ml-[4px] flex-1 mr-[24px] h-[13px] bg-[#393939] flex items-center justify-between px-[2px]">
            <Ic s={5} h={10}><path d="M5 0v10L0 5z" fill="#666" /></Ic>
            <Ic s={5} h={10}><path d="M0 0v10l5-5z" fill="#666" /></Ic>
          </div>
        </div>
      </div>
    </div>
  );
}

export default function App() {
  return (
    <div className="w-[1280px] h-[720px] bg-white relative overflow-hidden flex flex-col font-['Noto_Sans','Open_Sans',sans-serif]">
      <TitleBar />
      <MenuBar />
      <div className="h-[659px] shrink-0 ml-[6px] mr-[4px] bg-[#1d1d1d] flex flex-col">
        <Toolbar />
        <div className="h-[354px] shrink-0 flex">
          <ProjectPanel />
          <CompPanel />
          <RightColumn />
        </div>
        <Timeline />
      </div>

      {/* playhead */}
      <div className="absolute left-[777px] top-[465px] w-[1px] h-[245px] bg-[#c43a3a]" />
      <div className="absolute left-[771px] top-[475px]">
        <Ic s={13} h={15}><path d="M0 2a2 2 0 0 1 2-2h9a2 2 0 0 1 2 2v5c0 3-3 6-6.5 8C3 13 0 10 0 7z" fill="#e0b020" /><path d="M4 3v3M6.5 3v7M9 3v3" stroke="#5a4410" /></Ic>
      </div>
      {/* watermark */}
      <div className="absolute left-[65px] top-[625px] pointer-events-none">
        <Ic s={63} h={56}>
          <path d="M2 2C18 -2 34 12 40 34C30 20 18 10 9 10C4 16 8 26 16 34L12 38C2 28 -2 14 2 2z" fill="#a0a0a0" />
          <path d="M12 38C6 40 2 46 5 50C9 54 20 52 28 44L26 42C20 47 12 48 10 46C8 44 12 42 16 40z" fill="#a0a0a0" />
          <path fillRule="evenodd" d="M62 14C48 18 30 34 26 50C27 54 32 55 36 52C48 44 58 32 62 14zM54 24C50 34 42 44 33 48C36 38 44 30 54 24z" fill="#9a9a9a" />
        </Ic>
      </div>
      <span className="absolute left-[120px] top-[660px] text-[18.6px] leading-[24px] font-bold text-[#9a9a9a] font-['DejaVu_Sans',sans-serif] whitespace-nowrap pointer-events-none">PSD-Tutorials.de</span>
      {/* mouse pointer */}
      <div className="absolute left-[905px] top-[657px]">
        <Ic s={13} h={20}><path d="M1 1v15l4-3.5 3 6 2.5-1-3-6H12z" fill="#fff" stroke="#222" /></Ic>
      </div>
    </div>
  );
}
